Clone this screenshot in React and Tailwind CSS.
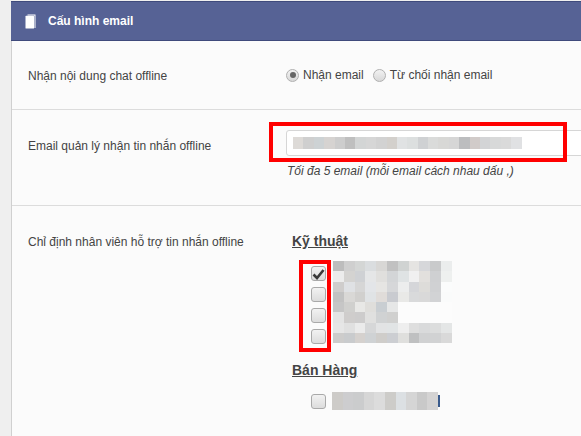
import React from "react";

// pixelated (redacted) areas
const emailBlur = ["#dddad7","#cfcfcf","#cdd2d4","#d6d3d1","#cdcdcd","#bfbfbf","#d3d5d5","#d6d6d6","#d2d2d2","#d3d0cc","#e0e2e3","#dcdfdf","#cfd1d3","#dadbda","#d8d8d6","#d6d6d6","#bcbdbf","#d1cbc9","#d3d4d6","#d8d9d9","#dadada","#e0e1e3"];

const staffBlur = [
  ["#bdbdbd","#cfcfcf","#d4d6d5","#dadddf","#d8d7d5","#c1c1c1","#d0d3d2","#e5e4e2","#d6d7da","#c9cacb","#ebeded"],
  ["#ececec","#d4d3d1","#cfd1d4","#e5e6e7","#e0dfdd","#d3d5d7","#dfe3e4","#f0f0f0","#e2e0dd","#cfd0d2","#eef0ef"],
  ["#cfcdcc","#dfe1e4","#d6d6d6","#e3e5e8","#e6e5e3","#d6d7d9","#eceded","#d5d6d9","#dddcd9","#d0d1d3","#fbfcfc"],
  ["#c2c2c2","#d9d8d6","#d1d0ce","#e0e3e5","#e0dcd9","#c9cbd0","#e9e9e7","#d9dadb","#d9d9d9","#d2d3d5","#fafbfb"],
  ["#c6c6c6","#d0d0ce","#e8e8e6","#dfdedb","#c9ced2","#e6e7e7","#fcfcfc","#fcfcfc","#fcfcfc","#fcfcfc","#fcfcfc"],
  ["#e4e4e4","#cfcdcc","#cdcccc","#e0e0df","#d0d2d3","#d0d0cf","#fcfcfc","#fcfcfc","#fcfcfc","#fcfcfc","#fcfcfc"],
  ["#e6e6e6","#e0e0e0","#ebebeb","#d6d7d8","#e2e3e4","#e1e4e5","#eeeeee","#dedede","#d9dadb","#dcdddd","#e4e6e6"],
  ["#cdcccb","#c9cbcd","#d5d1ce","#cfd2d4","#cfcdca","#ccced2","#dfdfdd","#bfc0c1","#d0d1d2","#d1d2d3","#d9d9d9"],
];

const salesBlur = ["#cdcbc8","#cdcdcf","#cbcccd","#d6d6d6","#dcdcdc","#cdccc9","#dce0e3","#d5d5d5","#c9c9c9","#d4d3d3"];

function Checkbox({ checked }) {
  return (
    <span className="flex h-[15px] w-[15px] items-center justify-center rounded-[3px] border border-[#a9a9a9] bg-gradient-to-b from-[#f2f2f2] to-[#dcdcdc]">
      {checked && (
        <svg width="13" height="12" viewBox="0 0 13 12">
          <path d="M1.5 6.5 L5 10 L11.5 2" fill="none" stroke="#3a3a3a" strokeWidth="2.6" />
        </svg>
      )}
    </span>
  );
}

function Radio({ checked }) {
  return (
    <span className="flex h-[13px] w-[13px] items-center justify-center rounded-full border border-[#b0b0b0] bg-gradient-to-b from-[#f2f2f2] to-[#d8d8d8]">
      {checked && <span className="h-[6px] w-[6px] rounded-full bg-[#666]" />}
    </span>
  );
}

export default function App() {
  return (
    <div className="h-[436px] w-[581px] overflow-hidden bg-[#efefef] pl-[11px] pt-px font-['Liberation_Sans',Arial,sans-serif] text-[12px] text-[#444]">
      <div className="h-full border-l border-[#d0d0d0] bg-[#fbfbfb]">
        {/* Header */}
        <div className="-ml-px flex h-[40px] items-center border-t border-b border-[#3f4a7c] bg-[#566295] pl-[14px] text-[12px] font-bold text-white">
          <svg width="11" height="15" viewBox="0 0 11 15" className="mr-[12px]">
            <path d="M2.5 0.5 H10.5 V14 H9.5 V1.5 H2.5 Z" fill="#fff" />
            <rect x="0.5" y="1.8" width="8.5" height="12.8" rx="0.6" fill="#fff" />
          </svg>
          Cấu hình email
        </div>

        {/* Chat offline */}
        <div className="flex h-[69px] border-b border-[#dcdcdc] pl-[16px] pt-[27px]">
          <div className="-mt-px w-[258px]">Nhận nội dung chat offline</div>
          <div className="flex h-[14px] items-center">
            <Radio checked />
            <span className="ml-[4px]">Nhận email</span>
            <span className="ml-[9px]"><Radio /></span>
            <span className="ml-[4px]">Từ chối nhận email</span>
          </div>
        </div>

        {/* Email */}
        <div className="flex h-[96px] border-b border-[#dcdcdc] pl-[16px]">
          <div className="w-[258px] pt-[27px]">Email quản lý nhận tin nhắn offline</div>
          <div className="relative flex-1 pt-[20px]">
            <div className="-mr-2 flex h-[26px] items-center rounded-[3px] border border-[#d6d6d6] bg-white pl-[6px]">
              {emailBlur.map((c, i) => (
                <span key={i} className="h-[12px] w-[10.4px]" style={{ backgroundColor: c }} />
              ))}
            </div>
            <div className="mt-[6px] pl-px italic">Tối đa 5 email (mỗi email cách nhau dấu ,)</div>
            <div className="absolute left-[-17px] top-[12px] h-[40px] w-[298px] border-[4px] border-[#f00]" />
          </div>
        </div>

        {/* Staff */}
        <div className="flex pl-[16px]">
          <div className="w-[263px] pt-[27px]">Chỉ định nhân viên hỗ trợ tin nhắn offline</div>
          <div className="relative flex-1 pt-[27px]">
            <div className="pl-px text-[14px] font-bold leading-[16px] text-[#444] underline">Kỹ thuật</div>
            <div className="mt-[12px] flex">
              <div className="ml-[20px] flex w-[21px] flex-col gap-[6px] pt-[5px]">
                <Checkbox checked />
                <Checkbox />
                <Checkbox />
                <Checkbox />
              </div>
              <div className="ml-[1px] flex flex-col">
                {staffBlur.map((row, i) => (
                  <div key={i} className="flex">
                    {row.map((c, j) => (
                      <span key={j} className="h-[10.25px] w-[10.8px]" style={{ backgroundColor: c }} />
                    ))}
                  </div>
                ))}
              </div>
            </div>
            <div className="mt-[18px] pl-px text-[14px] font-bold leading-[16px] text-[#444] underline">Bán Hàng</div>
            <div className="mt-[14px] flex items-center">
              <div className="ml-[20px] w-[21px]"><Checkbox /></div>
              <div className="flex">
                {salesBlur.map((c, i) => (
                  <span key={i} className="h-[18px] w-[10.6px]" style={{ backgroundColor: c }} />
                ))}
              </div>
              <span className="h-[12px] w-[2px] bg-[#3b5b8c]" />
            </div>
            <div className="absolute left-[8px] top-[54px] h-[92px] w-[32px] border-[4px] border-[#f00]" />
          </div>
        </div>
      </div>
    </div>
  );
}
